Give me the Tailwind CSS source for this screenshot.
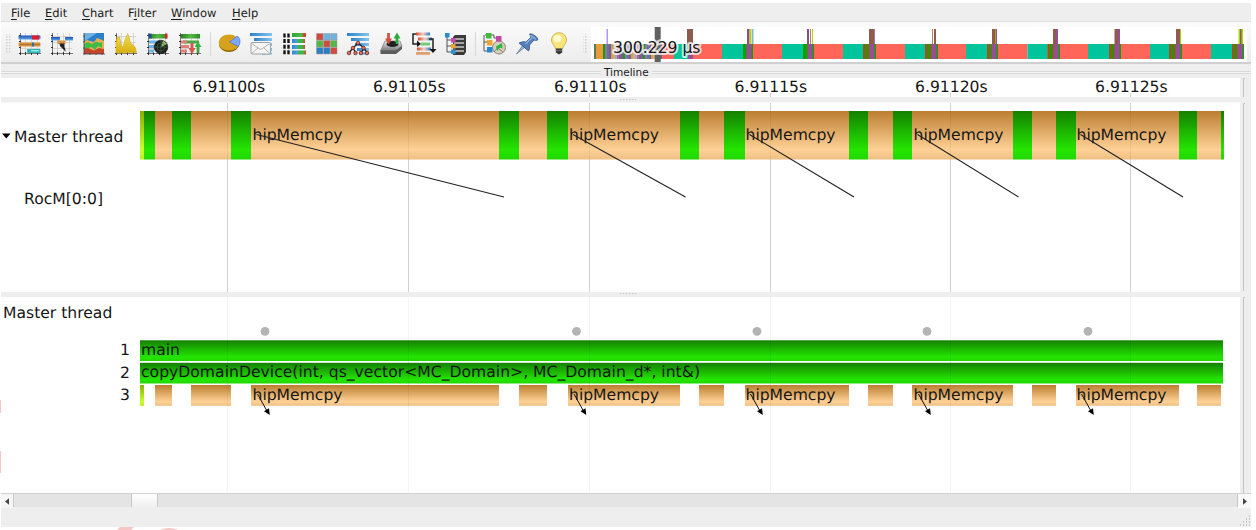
<!DOCTYPE html>
<html lang="en">
<head>
<meta charset="utf-8">
<title>Trace viewer</title>
<script src="https://cdn.jsdelivr.net/npm/@tailwindcss/browser@4"></script>
</head>
<body class="bg-white overflow-hidden text-[#1a1a1a] font-['DejaVu_Sans',sans-serif]">
<div class="relative w-[1256px] h-[530px] pl-px pt-[3px] pr-[5px] overflow-hidden">
<div class="flex flex-col h-[524px] bg-[#eeeeee]">
  <nav class="flex items-center h-[19px] shrink-0 pl-[10px] pt-[2px] text-[11.5px] leading-[18px] border-b border-[#dedede] [text-rendering:geometricPrecision]">
    <span class="w-[34px]"><u class="underline-offset-2">F</u>ile</span>
    <span class="w-[37px]"><u class="underline-offset-2">E</u>dit</span>
    <span class="w-[46px]"><u class="underline-offset-2">C</u>hart</span>
    <span class="w-[43px]">F<u class="underline-offset-2">i</u>lter</span>
    <span class="w-[61px]"><u class="underline-offset-2">W</u>indow</span>
    <span><u class="underline-offset-2">H</u>elp</span>
  </nav>
  <div class="flex h-[42px] shrink-0 bg-linear-to-b from-[#fbfbfb] to-[#ececec] border-b-2 border-[#d0d0d0]">
    <svg class="w-[590px] h-[40px] shrink-0" viewBox="1 22 590 40">
      <defs>
        <pattern id="grip" width="3" height="3" patternUnits="userSpaceOnUse"><rect width="1.5" height="1.5" fill="#cfcfcf"/></pattern>
        <linearGradient id="blue" x2="0" y2="1"><stop stop-color="#1c4fb0"/><stop offset="1" stop-color="#5fa6ea"/></linearGradient>
        <linearGradient id="gold" x2="0" y2="1"><stop stop-color="#f1dd50"/><stop offset="1" stop-color="#d8ae10"/></linearGradient>
        <linearGradient id="met" x2="0" y2="1"><stop stop-color="#e8e8e8"/><stop offset="1" stop-color="#777"/></linearGradient>
        <linearGradient id="rb"><stop stop-color="#d4482e"/><stop offset=".5" stop-color="#f3cfc0"/><stop offset="1" stop-color="#2f76c8"/></linearGradient>
        <linearGradient id="sky"><stop stop-color="#2b82cb"/><stop offset="1" stop-color="#84c5ee"/></linearGradient>
        <linearGradient id="grn"><stop stop-color="#2c7a28"/><stop offset=".5" stop-color="#55bb40"/><stop offset="1" stop-color="#2c8a28"/></linearGradient>
        <linearGradient id="gr"><stop stop-color="#2fa53c"/><stop offset=".7" stop-color="#4dbb48"/><stop offset=".85" stop-color="#d8402c"/><stop offset="1" stop-color="#d8402c"/></linearGradient>
        <linearGradient id="bgr"><stop stop-color="#2d86d5"/><stop offset=".35" stop-color="#4d9fd0"/><stop offset=".5" stop-color="#3fb545"/><stop offset=".8" stop-color="#3fb545"/><stop offset="1" stop-color="#d8402c"/></linearGradient>
        <g id="axes"><path d="M7.500 1V22M13.500 1V22M19.500 1V22M2 4.500H22M2 10.500H22M2 16.500H22" stroke="#cdcdcd" stroke-width=".8"/><path d="M2.500 1V22M2 21.500H23" stroke="#777" fill="none"/><path d="M1 3.500H3M1 9.500H3M1 15.500H3M1 21.500H3M2.500 20V23M7.500 20V23M13.500 20V23M19.500 20V23" stroke="#333"/></g>
        <g id="bars"><rect x="1" y="1" width="22" height="3" fill="url(#sky)"/><rect x="5" y="6" width="18" height="3" fill="url(#sky)"/><rect x="9" y="11" width="14" height="3" fill="url(#sky)"/><rect x="11" y="16" width="12" height="3" fill="url(#sky)"/><rect x="13" y="20.500" width="10" height="2" fill="url(#sky)"/></g>
      </defs>
      <rect x="6" y="34" width="5" height="19" fill="url(#grip)"/>
      <!-- Timeline charts -->
      <g transform="translate(18 32)"><use href="#axes"/><rect x="0.500" y="3.500" width="22" height="4" rx="1" fill="url(#blue)"/><rect x="14" y="3.500" width="7" height="4" fill="#e51a2b"/><rect x="0.500" y="10.500" width="22" height="4" rx="1" fill="#d8943c"/><path d="M2 12.500H22" stroke="#a87432"/><rect x="14" y="10.500" width="2" height="4" fill="#356cae"/><rect x="9" y="17" width="13.500" height="4" rx="1" fill="#28b4b8"/><rect x="13" y="18" width="8" height="1.500" fill="#9ee8e4"/></g>
      <g transform="translate(50 32)"><use href="#axes"/><rect x="1" y="5" width="9" height="3.500" fill="url(#blue)"/><rect x="15" y="5" width="8" height="3.500" fill="url(#blue)"/><rect x="7.500" y="8.500" width="8" height="3.500" fill="#d8943c"/><path d="M9.500 11.500H14.500V15L15.500 18V19.500L10 14Z" fill="#222"/></g>
      <g transform="translate(82 32)"><rect x="2" y="1" width="20" height="21" fill="#2b7fca"/><path d="M2 1H15L3 9Z" fill="#6fb0e2"/><path d="M2 10L5 8L8 9L12 10L15 6L18 7L22 9V21H2Z" fill="#e5b050"/><path d="M2 12L6 10L10 12L14 9.500L18 11L20 10V16L16 14L13 18L9 15L2 18Z" fill="#40bb49"/><path d="M2 17L6 16L12 18.500L17 16L22 17V22H2Z" fill="#c4452a"/><path d="M2 1V22H23M1 4H3M1 10H3M1 16H3M1 22H3M8 21V23M14 21V23M20 21V23" stroke="#444" stroke-width=".8" fill="none"/></g>
      <g transform="translate(114 32)"><use href="#axes"/><path d="M2 21V10L3.500 5L5.500 5L7.500 14L9 15L11 8L13 3L14.500 3L16.500 11L19 13L21 15L22.500 20.500Z" fill="url(#gold)" stroke="#d1ad15" stroke-width=".6"/></g>
      <g transform="translate(146 32)"><use href="#axes"/><rect x="3" y="2" width="18" height="4.500" fill="url(#grn)"/><rect x="3" y="1.500" width="2.500" height="5" fill="#184e91"/><rect x="19" y="1.500" width="2.500" height="5" fill="#d22"/><path d="M3 10H13M3 14.500H9M3 19H8" stroke="#6db4e8" stroke-width="3"/><circle cx="15" cy="15" r="6.800" fill="#1a211b" stroke="#111" stroke-width=".6"/><path d="M15 15L17 8.500L21 12Z" fill="#94c66b"/><circle cx="15" cy="15" r="4" fill="none" stroke="#426044" stroke-width=".7"/><path d="M8.500 15H21.500M15 8.500V21.500" stroke="#547552" stroke-width=".5"/></g>
      <g transform="translate(178 32)"><use href="#axes"/><rect x="3" y="2" width="19" height="4.500" fill="url(#grn)"/><rect x="5" y="8.500" width="16" height="3" fill="#4aa746"/><path d="M3 10H9M3 14.500H11M3 19H9" stroke="#e08078" stroke-width="3"/><path d="M14 11V17" stroke="#d4594a" stroke-width="3"/><path d="M10.500 16H17.500L14 22.500Z" fill="#d4594a"/><path d="M20 14V21" stroke="#35a840" stroke-width="2.800"/><path d="M16.500 15H23.500L20 9.500Z" fill="#35b340"/></g>
      <path d="M210.500 32V56M475.500 32V56" stroke="#d8d8d8"/>
      <!-- Summary and statistics charts -->
      <g transform="translate(217 32)"><ellipse cx="12" cy="12.500" rx="10" ry="7.500" fill="#8f6400"/><ellipse cx="12" cy="10.500" rx="10.300" ry="8" fill="#d6a21c"/><path d="M12.500 10L20.500 4Q25 8 21.500 14.500Z" fill="#7ea8ff" stroke="#4c75cd" stroke-width=".7"/></g>
      <g transform="translate(249 32)"><use href="#bars"/><rect x="2" y="10.500" width="19.500" height="11.500" rx="1" fill="#f5f5f5" stroke="#a0a0a0"/><path d="M2.500 11.500L11.700 17.500L21 11.500M2.500 21.500L9 16M21 21.500L15 16" fill="none" stroke="#aaa" stroke-width=".9"/></g>
      <g transform="translate(283 32)"><path d="M1.500 1.500V23M5.500 1.500V23" stroke="#151515" stroke-width="2.400" stroke-dasharray="4 1.600"/><rect x="9" y="1" width="14" height="4" fill="url(#gr)"/><rect x="9" y="7" width="13" height="4" fill="url(#bgr)"/><rect x="9" y="13" width="13" height="4" fill="url(#bgr)"/><rect x="9" y="18.500" width="14" height="4" fill="url(#bgr)"/></g>
      <g transform="translate(316 33)" stroke="#999" stroke-width=".5"><path fill="#d04a40" d="M.5 .5H7V7H.5ZM7.500 7.500H14V14H7.500ZM14.500 14.500H21V21H14.500Z"/><path fill="#6fb2de" d="M7.500 .5H14V7H7.500ZM14.500 .5H21V7H14.500Z"/><path fill="#2f7fc4" d="M.5 14.500H7V21H.5ZM7.500 14.500H14V21H7.500Z"/><path fill="#52b843" d="M.5 7.500H7V14H.5ZM14.500 7.500H21V14H14.500Z"/></g>
      <g transform="translate(346 32)"><use href="#bars"/><path d="M12 11L7 16M12 11L18 16M7 16L3 21M7 16L10 21M18 16L15 21M18 16L21 21" stroke="#222" stroke-width="1.300" fill="none"/><g fill="#e2705f" stroke="#501c18" stroke-width=".7"><circle cx="12" cy="11" r="1.800"/><circle cx="7" cy="16" r="1.800"/><circle cx="17.500" cy="16" r="1.800"/><circle cx="3" cy="21" r="1.800"/><circle cx="9.500" cy="21" r="1.800"/><circle cx="15" cy="21" r="1.800"/><circle cx="21" cy="21" r="1.800"/></g></g>
      <g transform="translate(379 32)"><path d="M6 9H21L23 14L17 19H1.500Z" fill="url(#met)" stroke="#777" stroke-width=".7"/><path d="M1.500 18.500H17L23 14V17L17 22H1.500Z" fill="#5c5c5c"/><ellipse cx="13.500" cy="12" rx="6" ry="3" fill="#202020"/><path d="M9.500 1V7" stroke="#d74f41" stroke-width="2.800"/><path d="M6 6.500H13L9.500 12.500Z" fill="#d74f41"/><path d="M18 6V12" stroke="#30a93e" stroke-width="2.800"/><path d="M14.500 6.500H21.500L18 .5Z" fill="#30a93e"/></g>
      <g transform="translate(411 32)"><rect x="5" y="0.500" width="14" height="3" fill="url(#rb)"/><rect x="7" y="5.500" width="14" height="3" fill="url(#rb)"/><rect x="10" y="10.500" width="9" height="3" fill="#70d078"/><rect x="6" y="15.500" width="14" height="3" fill="url(#rb)"/><rect x="5" y="20" width="14" height="2.800" fill="#e0a070"/><path d="M5 2H2V12H7M18 7H22V18" stroke="#222" stroke-width="1.500" fill="none"/><path d="M6 8.500L10 12L6 15ZM18.500 17H25.500L22 21Z" fill="#151515"/></g>
      <g transform="translate(444 32)"><path d="M3 3V20H9M3 8H9M3 14H9" fill="none" stroke="#555"/><path d="M9 5L11 3H22V20L20 23H9Z" fill="#3a3a3a"/><path d="M10 7H20M10 11H20M10 15H20M10 19H20" stroke="#c8c8c8" stroke-width="1.300"/><rect x="1" y="1" width="4.500" height="4.500" fill="#268bcf"/><rect x="7" y="6" width="4.500" height="4.500" fill="#cb47b1"/><rect x="7" y="12" width="4.500" height="4.500" fill="#f0a22b"/><rect x="7" y="17.500" width="4.500" height="4.500" fill="#2b93d2"/></g>
      <g transform="translate(482 32)"><path d="M2 3V19H7M2 10H8M3 3H12V6H16" fill="none" stroke="#555"/><circle cx="17" cy="15.500" r="6.500" fill="#d2cfc0" stroke="#94866e"/><path d="M12 20L19 12M17 17L21 20" stroke="#836e54" stroke-width=".8"/><path d="M14 14.500L20 11L20.500 16.500L18 15.500L15 19Z" fill="#2eb33c"/><rect x="4" y="1" width="5.500" height="5.500" fill="#43ba3e"/><rect x="14" y="4" width="5.500" height="5.500" fill="#c744a8"/><rect x="5" y="8" width="5.500" height="5.500" fill="#f1a52f"/><rect x="5" y="15" width="5.500" height="5.500" fill="#2487d4"/></g>
      <g transform="translate(515 32)"><path d="M1.500 22L8 13L10 15Z" fill="#9ab4d4" stroke="#627c9d" stroke-width=".8"/><path d="M4 11Q8 9 11 10L16 5L14.500 2Q17 1 22 5.500Q24 8 21.500 8.500L19 8L14.500 13Q15 17 13.500 19Z" fill="#5580bb" stroke="#2f558c" stroke-width=".8"/><path d="M10.500 12L17 5.500M15.500 3L21 7.500" stroke="#91b4df" stroke-width="1.200"/></g>
      <g transform="translate(547 32)"><path d="M4.500 8A7.500 7.300 0 0 1 19.500 8C19.500 12 16 13 15.500 17H8.500C8 13 4.500 12 4.500 8Z" fill="#f9e67a" stroke="#cbb050" stroke-width=".9"/><ellipse cx="10.500" cy="6.500" rx="4" ry="3.500" fill="#fffbd0"/><path d="M8.800 16.500H15.200V20.500L12 22.500L8.800 20.500Z" fill="#3a3a3a"/><path d="M9 18.500H15" stroke="#777" stroke-width=".8"/></g>
      <rect x="583" y="34" width="5" height="19" fill="url(#grip)"/>
    </svg>
    <svg id="overview" class="w-[656px] h-[35px] mt-[5px] shrink-0 bg-white" viewBox="591 27 656 35"></svg>
  </div>
  <div class="flex items-center h-[14px] shrink-0 text-[10.5px] leading-[12px]">
    <span class="h-[3px] w-[600px] mt-[3px] border-y border-[#d9d9d9] bg-[#f5f5f5]"></span>
    <span class="px-[3px] pt-[2px]">Timeline</span>
    <span class="h-[3px] flex-1 mt-[3px] border-y border-[#d9d9d9] bg-[#f5f5f5]"></span>
  </div>
  <svg id="chart" class="w-[1250px] h-[415px] shrink-0 [text-rendering:geometricPrecision]" viewBox="1 78 1250 415">
    <defs>
      <linearGradient id="o" x2="0" y2="1"><stop stop-color="#bb7e30"/><stop offset=".8" stop-color="#ffd197"/><stop offset="1" stop-color="#edbf82"/></linearGradient>
      <linearGradient id="g" x2="0" y2="1"><stop stop-color="#148000"/><stop offset=".8" stop-color="#24e500"/><stop offset="1" stop-color="#21d800"/></linearGradient>
      <linearGradient id="y" x2="0" y2="1"><stop stop-color="#87b000"/><stop offset=".8" stop-color="#c7ff30"/><stop offset="1" stop-color="#b7ef20"/></linearGradient>
    </defs>
    <path fill="#fff" d="M1 78H1240V97H1V78ZM1 102.500H1240V292H1V102.500ZM1 297H1240V493H1Z"/>
    <path fill="none" stroke="#c3c3c3" d="M1245 78.500H1243.500V97M1245 103.500H1243.500V291M1245 297.500H1243.500V493"/>
    <path stroke="#c8c8c8" stroke-dasharray="1.500 1.500" d="M620 99.500H636M620 293.500H636"/>
  </svg>
  <div class="flex h-[15px] shrink-0 border-t border-[#d2d2d2]">
    <div class="w-[12px] bg-[#f5f5f5] flex items-center justify-center"><svg class="w-[4px] h-[7px]" viewBox="0 0 5 8"><path d="M5 0V8L0 4Z" fill="#444"/></svg></div>
    <div class="w-[119px] bg-[#e4e4e4] border-x border-[#c8c8c8] h-[13px]"></div>
    <div class="w-[25px] bg-linear-to-b from-white to-[#eeeeee]"></div>
    <div class="flex-1 bg-[#e4e4e4] border-x border-[#c8c8c8] h-[13px]"></div>
    <div class="w-[13px] bg-[#f9f9f9] flex items-center justify-center"><svg class="w-[4px] h-[7px]" viewBox="0 0 5 8"><path d="M0 0V8L5 4Z" fill="#444"/></svg></div>
  </div>
  <div class="flex flex-1 justify-end items-end"><svg class="w-[12px] h-[12px]" viewBox="0 0 12 12"><path d="M10 1h1M7 4h1M10 4h1M4 7h1M7 7h1M10 7h1M1 10h1M4 10h1M7 10h1M10 10h1" stroke="#bcbcbc" stroke-width="1.300"/></svg></div>
</div>
<svg class="absolute inset-0 w-[1256px] h-[530px]" viewBox="0 0 1256 530"><path fill="#f5c6c4" d="M0 400H1V413H0ZM0 451H1V473H0ZM120 527H134L131 530H117ZM160 530Q169 526 178 530Z"/></svg>
</div>
<script>
const rect = (x, y, x2, y2, f) => `<rect x="${x}" y="${y}" width="${x2 - x}" height="${y2 - y}" fill="${f}"/>`;
const text = (x, y, s, extra = '') => `<text x="${x}" y="${y}" font-size="15.6" fill="#151515" ${extra}>${s}</text>`;

// Overview strip
const R = '#ff6659', T = '#00c49c', G = '#14a000', P = '#984e95', B = '#8f5b4d', O = '#e89a3c';
let ov = rect(594, 44, 596, 59, '#5c7a50') + rect(596, 44, 603, 59, O) + rect(603, 44, 605, 59, G);
const mix = ['#8a7aa8', '#c4a65c', '#8a7aa8', G, '#7a5a9a', '#b9a0cc', '#7a5a9a', '#6f6f9f', '#d4b060', P];
for (let x = 605, i = 0; x < 662; x += 2, i++) ov += rect(x, 44, x + 2, 59, mix[i * 7 % 10]);
ov += rect(662, 44, 674, 59, R) + rect(674, 44, 688, 59, T) + rect(688, 44, 693, 59, P);
const cl = [693, 753, 814, 876, 938, 998, 1060, 1121, 1182];
const te = [722, 782, 843, 905, 966, 1027.5, 1088, 1150, 1211];
const ce = [743, 803, 863, 925, 987, 1047.5, 1109, 1169, 1232];
cl.forEach((x, i) => {
  const c = ce[i], e = cl[i + 1] || 1244, m = i > 1;
  ov += rect(x, 44, te[i], 59, R) + rect(te[i], 44, c, 59, T) + rect(c, 44, e, 59, G);
  if (m) ov += rect(c, 44, c + 2.5, 59, '#a3521b') + rect(c + 4.5, 44, c + 6, 59, '#a3521b');
  ov += rect(e - 6.5, 44, e - 1.5, 59, P);
});
[[687, 693, B], [747, 749, '#875080'], [749, 750, '#d8b070'], [750, 751.5, '#a6d51a'], [752, 753.5, '#7dbccf'],
 [807, 809, '#875080'], [810, 811, '#b88060'], [812, 813, '#a6d51a'], [869, 874, B], [874, 874.8, P],
 [932, 933, '#b88060'], [934, 936, B], [992, 995, B], [995, 996, '#a6a51a'], [996, 997, P],
 [1053, 1056, B], [1056, 1058, P], [1114.5, 1118, B], [1118, 1120, P], [1176, 1180, B], [1180, 1181, '#a6d51a'],
 [1238.5, 1243, '#a6d51a'], [1240, 1241.5, B], [606.5, 608, '#b094ff']].forEach(p => ov += rect(p[0], 29, p[1], 44, p[2]));
ov += rect(654.7, 27, 660.7, 62, '#606060');
ov += text(613, 53, '300.229 µs', 'stroke="#fff" stroke-opacity=".75" stroke-width="4" paint-order="stroke" stroke-linejoin="round"');
document.getElementById('overview').innerHTML = ov;

// Thread timeline and call stack
let s = '';
const grid = [227.5, 408.5, 589.5, 770.5, 950.5, 1130.5];
grid.forEach((x, i) => {
  s += `<path d="M${x} 93V97M${x} 103V292" stroke="#d2d2d2"/><path d="M${x} 297V493" stroke="#f5f5f5"/>`;
  s += text([192.5, 373, 554, 734.5, 915, 1095][i], 92.3, '6.911' + ['00', '05', '10', '15', '20', '25'][i] + 's');
});
const edge = [144, 155, 172, 191, 231, 251, 499, 519, 547, 568, 680, 699, 724, 745, 849, 868, 893, 912, 1013, 1032, 1056, 1076, 1179, 1197, 1221, 1224];
s += rect(140, 111, 144, 159.5, 'url(#y)') + rect(140, 385, 144, 405.8, 'url(#y)');
for (let i = 0; i < edge.length - 1; i++) {
  s += rect(edge[i], 111, edge[i + 1], 159.5, i % 2 ? 'url(#o)' : 'url(#g)');
  if (i % 2) s += rect(edge[i], 385, edge[i + 1], 405.8, 'url(#o)');
}
s += rect(140, 340.3, 1223, 361, 'url(#g)') + rect(140, 362.8, 1223, 383.5, 'url(#g)');
grid.forEach(x => s += `<path d="M${x} 111V159.500M${x} 340V406" stroke="#000" stroke-opacity=".05"/>`);
s += text(141, 355, 'main') + text(141, 377.3, 'copyDomainDevice(int, qs_vector&lt;MC_Domain&gt;, MC_Domain_d*, int&amp;)', 'textLength="559"');
[[252.5, 504, 265], [569, 685.5, 576.5], [745.5, 854, 757], [913.5, 1018.5, 927], [1076.500, 1183, 1088]].forEach(([x, e, d]) => {
  s += text(x, 140.3, 'hipMemcpy') + text(x, 400, 'hipMemcpy');
  s += `<path d="M${x + 4} 134.500L${e} 197" stroke="#222" stroke-width="1.100"/><circle cx="${d}" cy="331.300" r="4.400" fill="#b3b3b3"/>`;
  s += `<path d="M${x + 5} 394L${x + 14.500} 411" stroke="#111"/><path d="M${x + 17.300} 415L${x + 11.500} 411.300L${x + 16.500} 408.300Z"/>`;
});
s += text(14, 142, 'Master thread') + text(24, 203.500, 'RocM[0:0]') + text(3, 318, 'Master thread');
s += text(120, 355, '1') + text(120, 377.500, '2') + text(120, 400, '3') + '<path d="M2 133.500H10.500L6.300 138.500Z"/>';
document.getElementById('chart').insertAdjacentHTML('beforeend', s);
</script>
</body>
</html>
